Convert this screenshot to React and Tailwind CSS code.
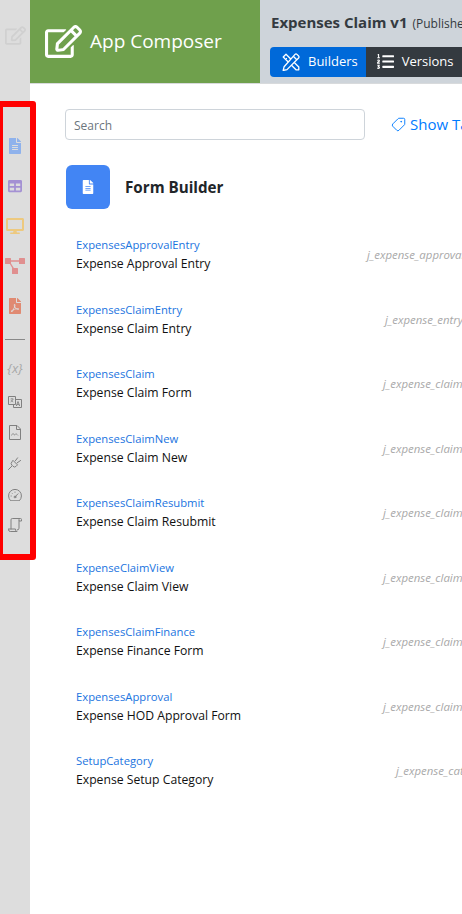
import React from "react";
import { FaRegEdit, FaFileAlt, FaTable, FaDesktop, FaListOl, FaFilePdf } from "react-icons/fa";
import { Tag } from "lucide-react";

const rows = [
  ["ExpensesApprovalEntry", "Expense Approval Entry", "j_expense_approval"],
  ["ExpensesClaimEntry", "Expense Claim Entry", "j_expense_entry"],
  ["ExpensesClaim", "Expense Claim Form", "j_expense_claim"],
  ["ExpensesClaimNew", "Expense Claim New", "j_expense_claim"],
  ["ExpensesClaimResubmit", "Expense Claim Resubmit", "j_expense_claim"],
  ["ExpenseClaimView", "Expense Claim View", "j_expense_claim"],
  ["ExpensesClaimFinance", "Expense Finance Form", "j_expense_claim"],
  ["ExpensesApproval", "Expense HOD Approval Form", "j_expense_claim"],
  ["SetupCategory", "Expense Setup Category", "j_expense_cat"],
];
const offsets = { j_expense_approval: "left-[337px]", j_expense_entry: "left-[355px]", j_expense_claim: "left-[353px]", j_expense_cat: "left-[366px]" };

const NetworkIcon = ({ className }) => (
  <svg viewBox="0 0 20 16" className={className} fill="currentColor">
    <rect x="0" y="0" width="6" height="6" rx="0.5" />
    <rect x="14" y="0" width="6" height="6" rx="0.5" />
    <rect x="7" y="10" width="6" height="6" rx="0.5" />
    <path d="M6 2.3h8v1.4H6zM4.6 5.6l1-.9 3.4 5.6-1.2.8z" />
  </svg>
);
const LanguageIcon = ({ className }) => (
  <svg viewBox="0 0 14 12" className={className} fill="none" stroke="currentColor" strokeWidth="1">
    <path d="M.5.5h7v8h-7z" />
    <path d="M7.5 3.5h6v8h-8v-3" />
    <path d="M2.5 3h3M4 2v1M5 3c-.3 1.5-1.2 2.5-2.5 3M3 4c.4 1 1.2 1.7 2.3 2" strokeWidth="0.7" />
    <path d="M8.3 10l1.7-4.5 1.7 4.5M8.9 8.6h2.2" strokeWidth="0.9" />
  </svg>
);
const FileImageIcon = ({ className }) => (
  <svg viewBox="0 0 12 15" className={className} fill="none" stroke="currentColor" strokeWidth="1">
    <path d="M.5.5h7.5l3.5 3.5v10.5H.5z" />
    <path d="M7.5.5v4h4" />
    <path d="M2.5 10.5c1-2 1.6-2.6 2.3-1.2.5 1 1 .8 1.6-.1.5-.8 1-.5 2.6 1.3" strokeWidth="0.8" />
  </svg>
);
const PlugIcon = ({ className }) => (
  <svg viewBox="0 0 14 13" className={className} fill="none" stroke="currentColor" strokeWidth="1" strokeLinecap="round">
    <path d="M5.2 3.6l4.3 4.3-1.4 1.4a2.2 2.2 0 0 1-3.1 0l-1.2-1.2a2.2 2.2 0 0 1 0-3.1z" />
    <path d="M3.8 9.2L.5 12.5M7.3 3.9L9.6.8M9.2 5.8l3.4-2.3" />
  </svg>
);
const GaugeIcon = ({ className }) => (
  <svg viewBox="0 0 14 12" className={className} fill="none" stroke="currentColor" strokeWidth="1" strokeLinecap="round">
    <path d="M2.4 11.5a6.5 6.5 0 1 1 9.2 0z" />
    <path d="M7 7.8l3-3" />
    <circle cx="7" cy="8" r="0.9" />
    <path d="M3 7h.4M4 4.2l.3.3M7 3v.4" strokeWidth="0.8" />
  </svg>
);
const ScrollIcon = ({ className }) => (
  <svg viewBox="0 0 14 14" className={className} fill="none" stroke="currentColor" strokeWidth="1" strokeLinecap="round">
    <path d="M3 11V1.8A1.3 1.3 0 0 1 4.3.5h8.2a1 1 0 0 1 1 1v1.5H11V1.5" />
    <path d="M11 3v7.2a1.8 1.8 0 0 1-1.8 1.8" />
    <path d="M.5 11h7v.9c0 .9.8 1.6 1.7 1.6H2.2A1.7 1.7 0 0 1 .5 11.8z" />
  </svg>
);
const RulerPencilIcon = ({ className }) => (
  <svg viewBox="0 0 18 18" className={className} fill="none" stroke="currentColor" strokeWidth="1.3" strokeLinejoin="round">
    <path d="M1.2 4L4 1.2l12.8 12.8v2.8H14z" />
    <path d="M3.5 6.5L5 5M6 9l1.5-1.5M8.5 11.5L10 10" strokeWidth="1" />
    <path d="M13 1.4a1.4 1.4 0 0 1 2 0l1.6 1.6a1.4 1.4 0 0 1 0 2L5 16.6l-3.8.9.9-3.8z" fill="#0069d9" />
    <path d="M11.3 3.2l3.5 3.5" />
  </svg>
);

export default function App() {
  return (
    <div className="relative flex h-[914px] w-[462px] overflow-hidden bg-white font-['Open_Sans','Noto_Sans',sans-serif]">
      <aside className="flex h-full w-[30px] shrink-0 flex-col items-center bg-[#dddddd]">
        <FaRegEdit className="mt-[25px] h-[21px] w-[21px] text-[#d0d0d0]" />
        <div className="mt-[92px] flex flex-col items-center">
          <FaFileAlt className="h-[16px] w-[12px] text-[#8fb2ec]" />
          <FaTable className="mt-[25px] h-[14px] w-[16px] text-[#a491d3]" />
          <FaDesktop className="mt-[25px] h-[16px] w-[18px] text-[#edc97f]" />
          <NetworkIcon className="mt-[24px] h-[16px] w-[20px] text-[#e08f8f]" />
          <FaFilePdf className="mt-[24px] h-[16px] w-[12px] text-[#e08a72]" />
          <div className="mt-[25px] h-px w-[20px] bg-[#888888]" />
          <div className="mt-[19px] text-[13px] italic leading-[18px] text-[#a8a8a8]">{"{x}"}</div>
          <LanguageIcon className="mt-[19px] h-[12px] w-[14px] text-[#808080]" />
          <FileImageIcon className="mt-[17px] h-[15px] w-[12px] text-[#808080]" />
          <PlugIcon className="mt-[17px] h-[13px] w-[14px] text-[#808080]" />
          <GaugeIcon className="mt-[19px] h-[12px] w-[14px] text-[#808080]" />
          <ScrollIcon className="mt-[17px] h-[14px] w-[14px] text-[#808080]" />
        </div>
      </aside>

      <main className="flex h-full w-[432px] shrink-0 flex-col overflow-hidden">
        <header className="flex h-[84px] w-[500px] shrink-0 border-b border-[#d8dadc]">
          <div className="flex h-full w-[230px] shrink-0 items-center bg-[#6fa04c] pl-[15px] text-white">
            <FaRegEdit className="h-[37px] w-[37px]" />
            <span className="ml-[8px] whitespace-nowrap text-[19px]">App Composer</span>
          </div>
          <div className="h-full flex-1 bg-[#ced4da] pl-[10px] pt-[11px]">
            <div className="flex items-baseline whitespace-nowrap pl-[1px] text-[#343a40]">
              <span className="text-[15px] font-bold">Expenses Claim v1</span>
              <span className="ml-[5px] text-[12px]">(Published)</span>
            </div>
            <div className="mt-[13px] flex h-[30px] w-[300px] text-[13px] text-white">
              <div className="flex items-center rounded-l-[4px] bg-[#0069d9] pl-[12px] pr-[8px]">
                <RulerPencilIcon className="h-[18px] w-[18px]" />
                <span className="ml-[8px]">Builders</span>
              </div>
              <div className="flex items-center bg-[#343a40] pl-[11px] pr-[8px]">
                <FaListOl className="h-[17px] w-[17px]" />
                <span className="ml-[8px]">Versions</span>
              </div>
            </div>
          </div>
        </header>

        <div className="flex items-center pl-[35px] pt-[25px]">
          <div className="flex h-[31px] w-[300px] shrink-0 items-center rounded-[4px] border border-[#ced4da] pl-[8px] pt-[2px] text-[12px] text-[#6c757d]">Search</div>
          <Tag strokeWidth={1.5} className="ml-[26px] h-[15px] w-[15px] shrink-0 -scale-x-100 text-[#007bff]" />
          <span className="ml-[4px] shrink-0 whitespace-nowrap text-[15px] text-[#007bff]">Show Tags</span>
        </div>

        <div className="flex items-center pl-[36px] pt-[25px]">
          <div className="flex h-[44px] w-[44px] items-center justify-center rounded-[6px] bg-[#4285f4]">
            <FaFileAlt className="h-[14px] w-[12px] text-white" />
          </div>
          <h2 className="ml-[15px] pt-[1px] text-[15.2px] font-bold text-[#212529]">Form Builder</h2>
        </div>

        <ul className="w-[500px] pt-[26px]">
          {rows.map(([id, label, table]) => (
            <li key={id} className="relative h-[64.5px] pl-[46px] leading-[19px]">
              <div className="text-[11.25px] text-[#1a74e0]">{id}</div>
              <div className="text-[12.2px] text-[#111111]">{label}</div>
              <div className={`absolute top-[10px] whitespace-nowrap text-[11.4px] italic text-[#a8a8a8] ${offsets[table]}`}>{table}</div>
            </li>
          ))}
        </ul>
      </main>

      <div className="pointer-events-none absolute left-0 top-[101px] h-[459px] w-[36px] rounded-br-[3px] rounded-tr-[3px] border-y-[6px] border-l-[3px] border-r-[6px] border-[#ff0000]" />
    </div>
  );
}
